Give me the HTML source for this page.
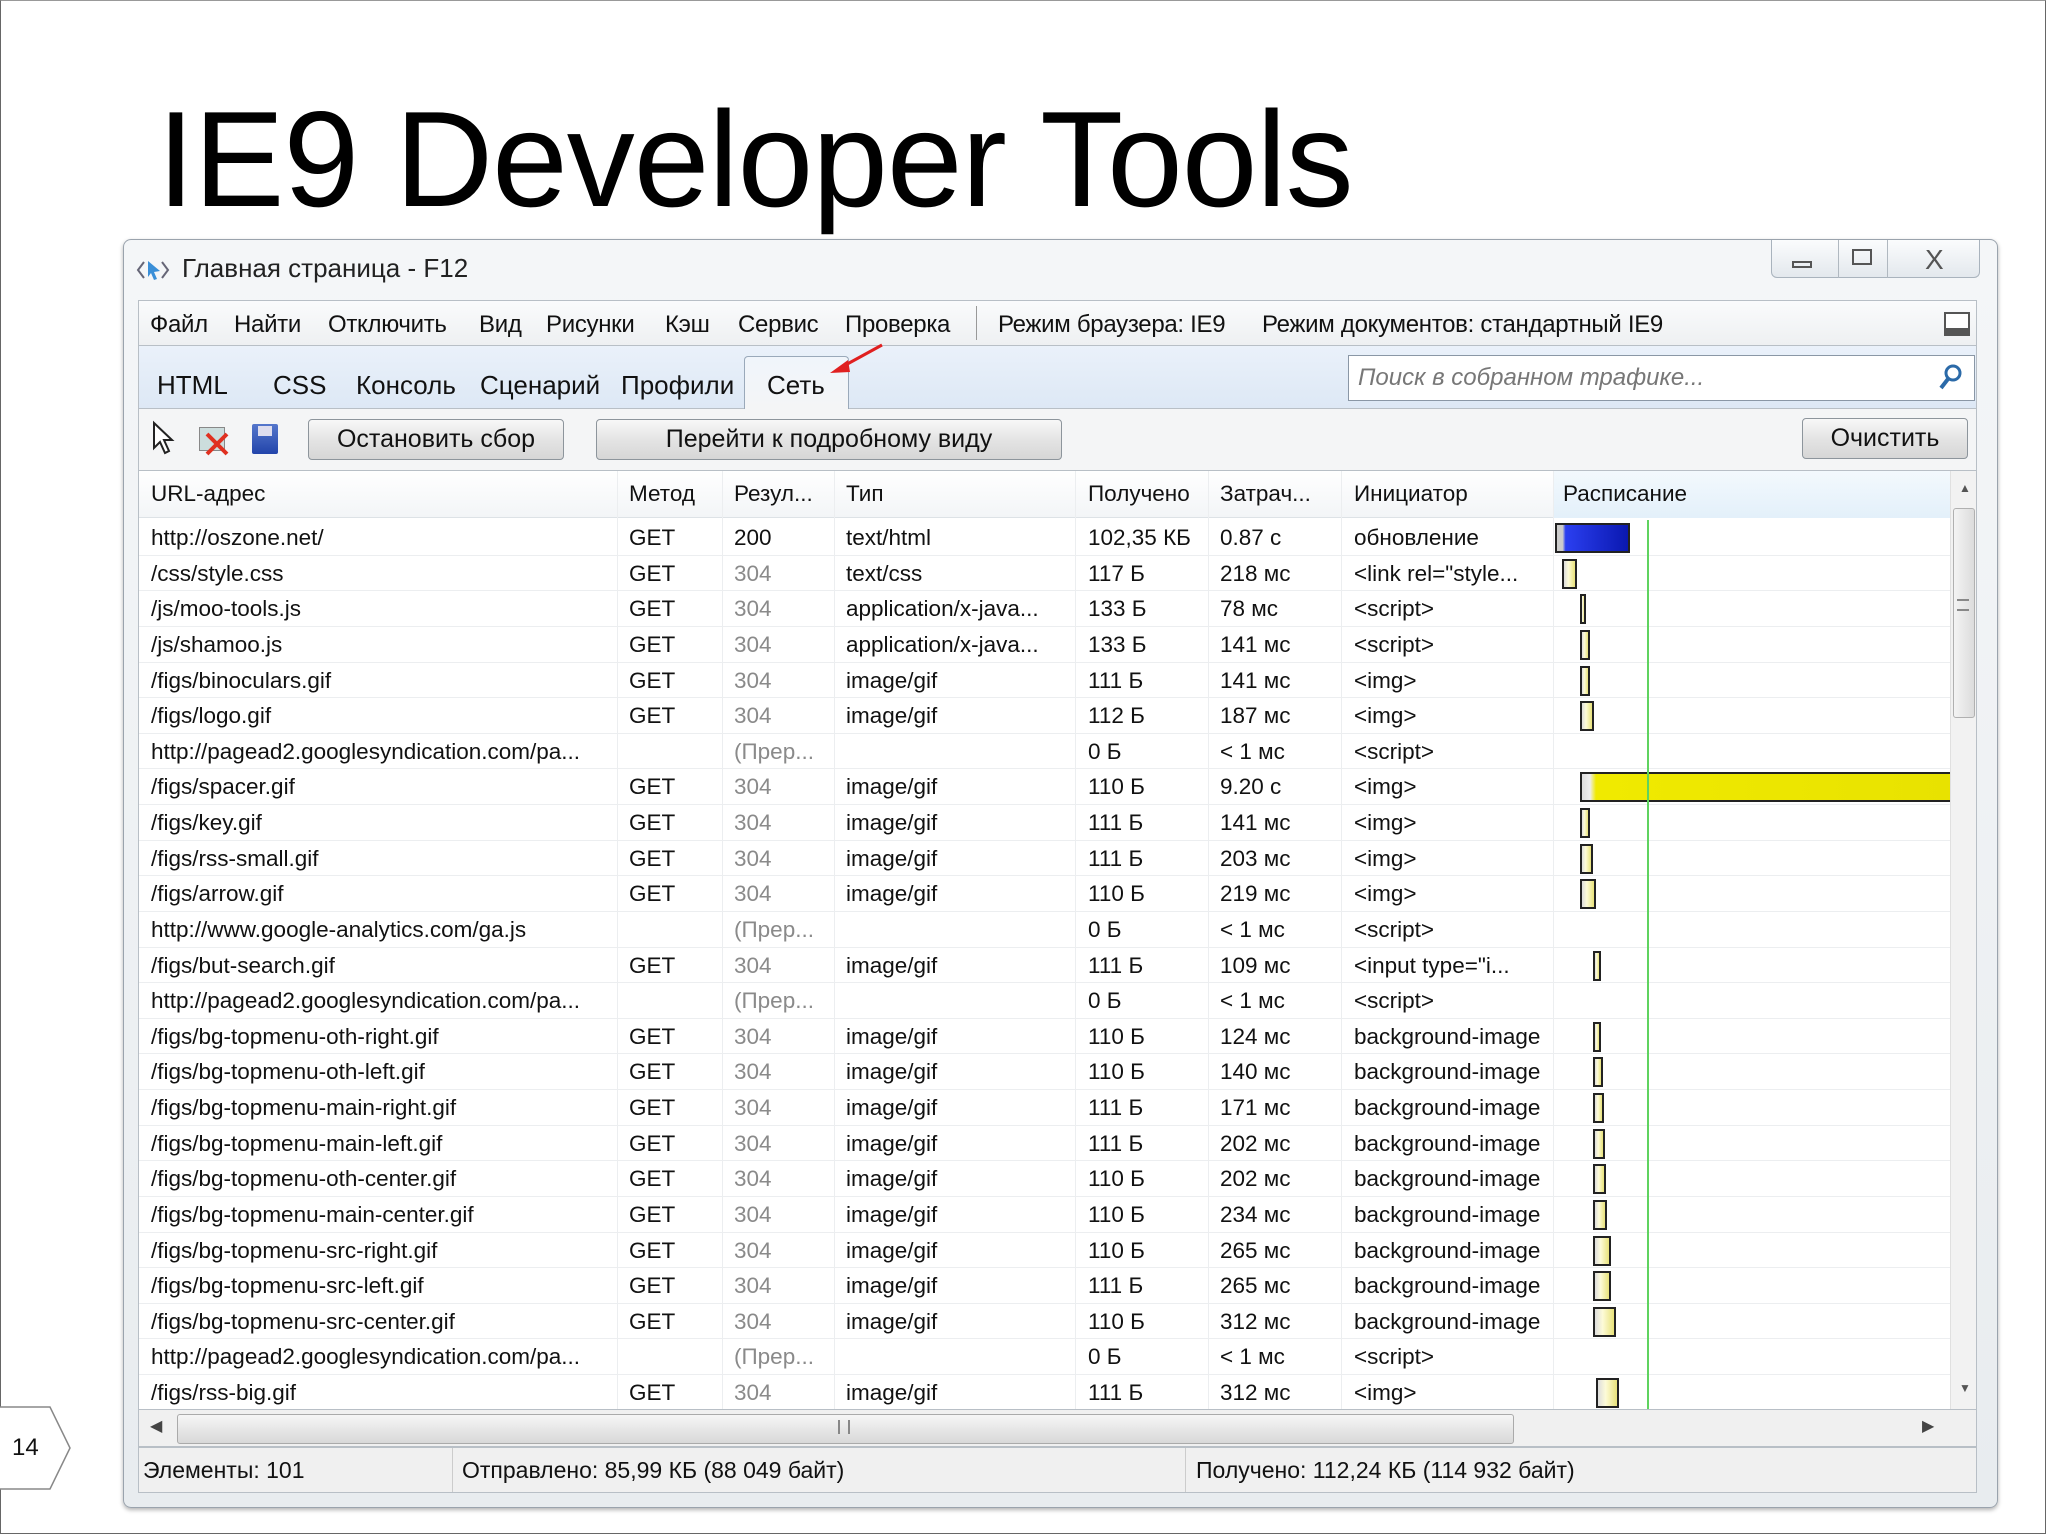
<!DOCTYPE html>
<html><head><meta charset="utf-8"><style>
*{box-sizing:border-box;margin:0;padding:0}
body{width:2048px;height:1536px;background:#fff;position:relative;overflow:hidden;font-family:"Liberation Sans",sans-serif;color:#111}
.a{position:absolute}
.slide{left:0;top:0;width:2046px;height:1534px;border:1px solid #666;border-top:1px solid #999}
h1{position:absolute;left:157px;top:78px;font-size:136px;font-weight:normal;letter-spacing:-1px;color:#000;line-height:1.2}
.win{left:123px;top:239px;width:1875px;height:1269px;border:1px solid #9aa3ad;border-radius:8px;background:linear-gradient(#f4f6f8,#e8ecef);box-shadow:0 2px 4px rgba(0,0,0,.3)}
.t{font-size:26px;white-space:nowrap}
.m{position:absolute;top:311px;font-size:24px;letter-spacing:-0.3px;white-space:nowrap}
.ctrl{left:1771px;top:240px;width:209px;height:38px;border:1px solid #a9b3bd;border-top:none;border-radius:0 0 6px 6px;background:linear-gradient(#fbfcfd,#e3e8ed)}
.menu{left:138px;top:300px;width:1839px;height:46px;background:linear-gradient(#fafbfc,#eef0f2);border:1px solid #b8bfc6}
.tabs{left:138px;top:346px;width:1839px;height:63px;background:linear-gradient(#eaf1fa,#dde8f5);border:1px solid #b8bfc6;border-top:none}
.tb{left:138px;top:409px;width:1839px;height:61px;background:#f4f5f6;border-left:1px solid #b8bfc6;border-right:1px solid #b8bfc6}
.btn{height:41px;border:1px solid #8d959c;border-radius:4px;background:linear-gradient(#f8f8f8,#e4e4e4 50%,#d6d6d6);font-size:25px;text-align:center;line-height:39px}
.grid{left:138px;top:470px;width:1839px;height:940px;background:#fff;border:1px solid #b8bfc6;overflow:hidden}
.hdr{position:absolute;left:0;top:0;width:1811px;height:47px;background:linear-gradient(#fff,#f3f5f7);border-bottom:1px solid #dde2e6}
.hdr span,.r span{position:absolute;top:0;font-size:22.5px;white-space:nowrap}
.hdr span{line-height:46px}
.rows{position:absolute;left:0;top:49px;width:1811px}
.r{position:relative;height:35.64px;border-bottom:1px solid #eceef0}
.r span{line-height:35px}
.g{color:#8a8a8a}
.c1{left:12px}.c2{left:490px}.c3{left:595px}.c4{left:707px}.c5{left:949px}.c6{left:1081px}.c7{left:1215px}
.vl{position:absolute;top:0;width:1px;height:940px;background:#eceef0}
.b{position:absolute;top:3px;height:30px;border:2px solid #222;background:linear-gradient(90deg,#ddd,#fdfbd8 40%,#e8e27a)}
.status{left:138px;top:1447px;width:1839px;height:46px;background:#f0f0f0;border:1px solid #b8bfc6}
</style></head><body>
<div class="a slide"></div>
<h1>IE9 Developer Tools</h1>
<div class="a win"></div>
<svg class="a" style="left:136px;top:257px" width="34" height="26" viewBox="0 0 34 26"><path d="M8 5 L2 13 L8 21" stroke="#667" stroke-width="2" fill="none"/><path d="M26 5 L32 13 L26 21" stroke="#667" stroke-width="2" fill="none"/><path d="M12 4 L24 14 L18 15 L21 22 L18 23 L15 16 L12 20Z" fill="#3a8fd8"/></svg>
<div class="a t" style="left:182px;top:253px;color:#222">Главная страница - F12</div>
<div class="a ctrl"></div>
<div class="a" style="left:1838px;top:240px;width:1px;height:38px;background:#b0b8c0"></div>
<div class="a" style="left:1887px;top:240px;width:1px;height:38px;background:#b0b8c0"></div>
<div class="a" style="left:1792px;top:261px;width:20px;height:7px;border:2px solid #555"></div>
<div class="a" style="left:1852px;top:249px;width:20px;height:16px;border:2px solid #555"></div>
<div class="a" style="left:1925px;top:244px;font-size:28px;color:#555">X</div>
<div class="a menu"></div>
<div class="m" style="left:150px">Файл</div>
<div class="m" style="left:234px">Найти</div>
<div class="m" style="left:328px">Отключить</div>
<div class="m" style="left:479px">Вид</div>
<div class="m" style="left:546px">Рисунки</div>
<div class="m" style="left:665px">Кэш</div>
<div class="m" style="left:738px">Сервис</div>
<div class="m" style="left:845px">Проверка</div>
<div class="a" style="left:976px;top:306px;width:1px;height:34px;background:#999"></div>
<div class="m" style="left:998px">Режим браузера: IE9</div>
<div class="m" style="left:1262px">Режим документов: стандартный IE9</div>
<div class="a" style="left:1944px;top:312px;width:26px;height:24px;border:2px solid #555;border-bottom-width:8px;background:#fff"></div>
<div class="a tabs"></div>
<div class="a" style="left:744px;top:356px;width:105px;height:54px;background:linear-gradient(#f0f5fb,#f4f5f6);border:1px solid #9aa9ba;border-bottom:none;border-radius:4px 4px 0 0"></div>
<div class="a t" style="left:157px;top:370px">HTML</div>
<div class="a t" style="left:273px;top:370px">CSS</div>
<div class="a t" style="left:356px;top:370px">Консоль</div>
<div class="a t" style="left:480px;top:370px">Сценарий</div>
<div class="a t" style="left:621px;top:370px">Профили</div>
<div class="a t" style="left:767px;top:370px">Сеть</div>
<svg class="a" style="left:826px;top:340px" width="60" height="40"><path d="M56 5 L14 28" stroke="#e02020" stroke-width="3"/><path d="M4 33 L22 20 L24 32Z" fill="#e02020"/></svg>
<div class="a" style="left:1348px;top:355px;width:627px;height:46px;background:#fff;border:1px solid #8a97a6"></div>
<div class="a" style="left:1358px;top:364px;font-size:24px;font-style:italic;color:#777">Поиск в собранном трафике...</div>
<svg class="a" style="left:1937px;top:362px" width="28" height="30"><circle cx="16" cy="11" r="7" stroke="#2b6aa8" stroke-width="3" fill="none"/><path d="M11 17 L4 26" stroke="#2b6aa8" stroke-width="4"/></svg>
<div class="a tb"></div>
<svg class="a" style="left:151px;top:420px" width="26" height="36"><path d="M3 3 L3 28 L9 22 L14 33 L18 31 L13 20 L21 20Z" fill="#fff" stroke="#222" stroke-width="2"/></svg>
<div class="a" style="left:199px;top:427px;width:26px;height:24px;border:1px solid #888;background:#cdd"></div>
<svg class="a" style="left:203px;top:430px" width="30" height="28"><path d="M4 4 L24 24 M24 4 L4 24" stroke="#e03020" stroke-width="4"/></svg>
<div class="a" style="left:252px;top:424px;width:26px;height:30px;background:linear-gradient(#5577cc,#2244aa);border-radius:2px"></div>
<div class="a" style="left:258px;top:426px;width:14px;height:10px;background:#dde"></div>
<div class="a btn" style="left:308px;top:419px;width:256px">Остановить сбор</div>
<div class="a btn" style="left:596px;top:419px;width:466px">Перейти к подробному виду</div>
<div class="a btn" style="left:1802px;top:418px;width:166px">Очистить</div>
<div class="a grid">
<div class="hdr">
<span class="c1">URL-адрес</span><span class="c2">Метод</span><span class="c3">Резул...</span><span class="c4">Тип</span><span class="c5">Получено</span><span class="c6">Затрач...</span><span class="c7">Инициатор</span>
<div style="position:absolute;left:1414px;top:0;width:397px;height:47px;background:linear-gradient(#f3f9fd,#e3f0fa);border-left:1px solid #9cc8e8"></div>
<span style="left:1424px">Расписание</span>
</div>
<div class="vl" style="left:478px"></div><div class="vl" style="left:583px"></div><div class="vl" style="left:695px"></div><div class="vl" style="left:936px"></div><div class="vl" style="left:1069px"></div><div class="vl" style="left:1202px"></div><div class="vl" style="left:1414px"></div>
<div class="rows">
<div class="r"><span class="c1">http://oszone.net/</span><span class="c2">GET</span><span class="c3">200</span><span class="c4">text/html</span><span class="c5">102,35 КБ</span><span class="c6">0.87 с</span><span class="c7">обновление</span><div class="b" style="left:1416px;width:75px;background:linear-gradient(90deg,#ccc 0,#ccc 8%,#2b3ff0 12%,#0a18b0)"></div></div>
<div class="r"><span class="c1">/css/style.css</span><span class="c2">GET</span><span class="c3 g">304</span><span class="c4">text/css</span><span class="c5">117 Б</span><span class="c6">218 мс</span><span class="c7">&lt;link rel="style...</span><div class="b" style="left:1423px;width:15px"></div></div>
<div class="r"><span class="c1">/js/moo-tools.js</span><span class="c2">GET</span><span class="c3 g">304</span><span class="c4">application/x-java...</span><span class="c5">133 Б</span><span class="c6">78 мс</span><span class="c7">&lt;script&gt;</span><div class="b" style="left:1441px;width:6px"></div></div>
<div class="r"><span class="c1">/js/shamoo.js</span><span class="c2">GET</span><span class="c3 g">304</span><span class="c4">application/x-java...</span><span class="c5">133 Б</span><span class="c6">141 мс</span><span class="c7">&lt;script&gt;</span><div class="b" style="left:1441px;width:10px"></div></div>
<div class="r"><span class="c1">/figs/binoculars.gif</span><span class="c2">GET</span><span class="c3 g">304</span><span class="c4">image/gif</span><span class="c5">111 Б</span><span class="c6">141 мс</span><span class="c7">&lt;img&gt;</span><div class="b" style="left:1441px;width:10px"></div></div>
<div class="r"><span class="c1">/figs/logo.gif</span><span class="c2">GET</span><span class="c3 g">304</span><span class="c4">image/gif</span><span class="c5">112 Б</span><span class="c6">187 мс</span><span class="c7">&lt;img&gt;</span><div class="b" style="left:1441px;width:14px"></div></div>
<div class="r"><span class="c1">http://pagead2.googlesyndication.com/pa...</span><span class="c3 g">(Прер...</span><span class="c5">0 Б</span><span class="c6">&lt; 1 мс</span><span class="c7">&lt;script&gt;</span></div>
<div class="r"><span class="c1">/figs/spacer.gif</span><span class="c2">GET</span><span class="c3 g">304</span><span class="c4">image/gif</span><span class="c5">110 Б</span><span class="c6">9.20 с</span><span class="c7">&lt;img&gt;</span><div class="b" style="left:1441px;width:380px;border-right:none;background:linear-gradient(90deg,#ddd 0,#eee 8px,#f0ea00 14px,#e8e200)"></div></div>
<div class="r"><span class="c1">/figs/key.gif</span><span class="c2">GET</span><span class="c3 g">304</span><span class="c4">image/gif</span><span class="c5">111 Б</span><span class="c6">141 мс</span><span class="c7">&lt;img&gt;</span><div class="b" style="left:1441px;width:10px"></div></div>
<div class="r"><span class="c1">/figs/rss-small.gif</span><span class="c2">GET</span><span class="c3 g">304</span><span class="c4">image/gif</span><span class="c5">111 Б</span><span class="c6">203 мс</span><span class="c7">&lt;img&gt;</span><div class="b" style="left:1441px;width:13px"></div></div>
<div class="r"><span class="c1">/figs/arrow.gif</span><span class="c2">GET</span><span class="c3 g">304</span><span class="c4">image/gif</span><span class="c5">110 Б</span><span class="c6">219 мс</span><span class="c7">&lt;img&gt;</span><div class="b" style="left:1441px;width:16px"></div></div>
<div class="r"><span class="c1">http://www.google-analytics.com/ga.js</span><span class="c3 g">(Прер...</span><span class="c5">0 Б</span><span class="c6">&lt; 1 мс</span><span class="c7">&lt;script&gt;</span></div>
<div class="r"><span class="c1">/figs/but-search.gif</span><span class="c2">GET</span><span class="c3 g">304</span><span class="c4">image/gif</span><span class="c5">111 Б</span><span class="c6">109 мс</span><span class="c7">&lt;input type="i...</span><div class="b" style="left:1454px;width:8px"></div></div>
<div class="r"><span class="c1">http://pagead2.googlesyndication.com/pa...</span><span class="c3 g">(Прер...</span><span class="c5">0 Б</span><span class="c6">&lt; 1 мс</span><span class="c7">&lt;script&gt;</span></div>
<div class="r"><span class="c1">/figs/bg-topmenu-oth-right.gif</span><span class="c2">GET</span><span class="c3 g">304</span><span class="c4">image/gif</span><span class="c5">110 Б</span><span class="c6">124 мс</span><span class="c7">background-image</span><div class="b" style="left:1454px;width:8px"></div></div>
<div class="r"><span class="c1">/figs/bg-topmenu-oth-left.gif</span><span class="c2">GET</span><span class="c3 g">304</span><span class="c4">image/gif</span><span class="c5">110 Б</span><span class="c6">140 мс</span><span class="c7">background-image</span><div class="b" style="left:1454px;width:10px"></div></div>
<div class="r"><span class="c1">/figs/bg-topmenu-main-right.gif</span><span class="c2">GET</span><span class="c3 g">304</span><span class="c4">image/gif</span><span class="c5">111 Б</span><span class="c6">171 мс</span><span class="c7">background-image</span><div class="b" style="left:1454px;width:11px"></div></div>
<div class="r"><span class="c1">/figs/bg-topmenu-main-left.gif</span><span class="c2">GET</span><span class="c3 g">304</span><span class="c4">image/gif</span><span class="c5">111 Б</span><span class="c6">202 мс</span><span class="c7">background-image</span><div class="b" style="left:1454px;width:12px"></div></div>
<div class="r"><span class="c1">/figs/bg-topmenu-oth-center.gif</span><span class="c2">GET</span><span class="c3 g">304</span><span class="c4">image/gif</span><span class="c5">110 Б</span><span class="c6">202 мс</span><span class="c7">background-image</span><div class="b" style="left:1454px;width:13px"></div></div>
<div class="r"><span class="c1">/figs/bg-topmenu-main-center.gif</span><span class="c2">GET</span><span class="c3 g">304</span><span class="c4">image/gif</span><span class="c5">110 Б</span><span class="c6">234 мс</span><span class="c7">background-image</span><div class="b" style="left:1454px;width:14px"></div></div>
<div class="r"><span class="c1">/figs/bg-topmenu-src-right.gif</span><span class="c2">GET</span><span class="c3 g">304</span><span class="c4">image/gif</span><span class="c5">110 Б</span><span class="c6">265 мс</span><span class="c7">background-image</span><div class="b" style="left:1454px;width:18px"></div></div>
<div class="r"><span class="c1">/figs/bg-topmenu-src-left.gif</span><span class="c2">GET</span><span class="c3 g">304</span><span class="c4">image/gif</span><span class="c5">111 Б</span><span class="c6">265 мс</span><span class="c7">background-image</span><div class="b" style="left:1454px;width:18px"></div></div>
<div class="r"><span class="c1">/figs/bg-topmenu-src-center.gif</span><span class="c2">GET</span><span class="c3 g">304</span><span class="c4">image/gif</span><span class="c5">110 Б</span><span class="c6">312 мс</span><span class="c7">background-image</span><div class="b" style="left:1454px;width:23px"></div></div>
<div class="r"><span class="c1">http://pagead2.googlesyndication.com/pa...</span><span class="c3 g">(Прер...</span><span class="c5">0 Б</span><span class="c6">&lt; 1 мс</span><span class="c7">&lt;script&gt;</span></div>
<div class="r"><span class="c1">/figs/rss-big.gif</span><span class="c2">GET</span><span class="c3 g">304</span><span class="c4">image/gif</span><span class="c5">111 Б</span><span class="c6">312 мс</span><span class="c7">&lt;img&gt;</span><div class="b" style="left:1457px;width:23px"></div></div>
</div>
<div style="position:absolute;left:1508px;top:49px;width:2px;height:900px;background:#5fd35f"></div>
<div style="position:absolute;left:1811px;top:0;width:28px;height:940px;background:#f2f2f2;border-left:1px solid #e0e0e0"></div>
<div style="position:absolute;left:1814px;top:37px;width:22px;height:210px;background:linear-gradient(90deg,#f4f4f4,#dcdcdc);border:1px solid #b0b0b0;border-radius:3px"></div>
<div style="position:absolute;left:1820px;top:10px;font-size:12px;color:#555">▲</div>
<div style="position:absolute;left:1820px;top:910px;font-size:12px;color:#555">▼</div>
<div style="position:absolute;left:1818px;top:128px;width:12px;height:12px;border-top:2px solid #888;border-bottom:2px solid #888"></div>
</div>
<div class="a" style="left:138px;top:1410px;width:1839px;height:37px;background:#f0f0f0;border:1px solid #b8bfc6;border-top:none"></div>
<div class="a" style="left:177px;top:1414px;width:1337px;height:30px;background:linear-gradient(#f6f6f6,#d8d8d8);border:1px solid #aaa;border-radius:3px"></div>
<div class="a" style="left:150px;top:1416px;font-size:16px;color:#444">◀</div>
<div class="a" style="left:1922px;top:1416px;font-size:16px;color:#444">▶</div>
<div class="a" style="left:838px;top:1420px;width:12px;height:14px;border-left:2px solid #888;border-right:2px solid #888"></div>
<div class="a status"></div>
<div class="a" style="left:452px;top:1448px;width:1px;height:44px;background:#ccc"></div>
<div class="a" style="left:1185px;top:1448px;width:1px;height:44px;background:#ccc"></div>
<div class="a" style="left:143px;top:1457px;font-size:23px">Элементы: 101</div>
<div class="a" style="left:462px;top:1457px;font-size:23px">Отправлено: 85,99 КБ (88 049 байт)</div>
<div class="a" style="left:1196px;top:1457px;font-size:23px">Получено: 112,24 КБ (114 932 байт)</div>
<svg class="a" style="left:0;top:1406px" width="72" height="84"><path d="M0 1 L50 1 L70 42 L50 83 L0 83" fill="#fff" stroke="#888" stroke-width="1.5"/></svg>
<div class="a" style="left:12px;top:1434px;font-size:24px">14</div>
</body></html>
